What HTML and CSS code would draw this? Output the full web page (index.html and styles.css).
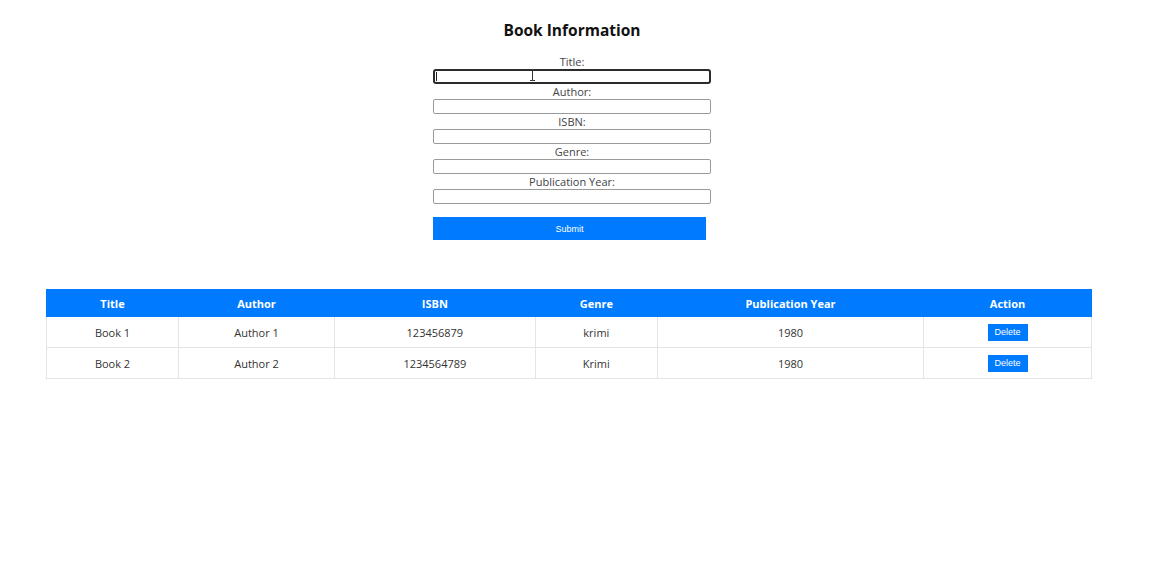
FILE: index.html
```html
<!DOCTYPE html>
<html>
<head>
<meta charset="utf-8">
<title>Book Information</title>
<link rel="stylesheet" href="styles.css">
</head>
<body>
<div class="page">
  <h1 class="title">Book Information</h1>
  <form class="book-form">
    <label class="field-label">Title:</label>
    <div class="input-wrap">
      <input class="field-input focused" type="text">
      <span class="caret"></span>
      <svg class="ibeam" width="7" height="12" viewBox="0 0 7 12"><path d="M1 0.5h2.5v11H1M6 0.5H3.5M6 11.5H3.5" fill="none" stroke="#333" stroke-width="1"/></svg>
    </div>
    <label class="field-label">Author:</label>
    <input class="field-input" type="text">
    <label class="field-label">ISBN:</label>
    <input class="field-input" type="text">
    <label class="field-label">Genre:</label>
    <input class="field-input" type="text">
    <label class="field-label">Publication Year:</label>
    <input class="field-input" type="text">
    <button class="submit-btn" type="button">Submit</button>
  </form>
  <table class="book-table">
    <thead>
      <tr>
        <th class="c1">Title</th>
        <th class="c2">Author</th>
        <th class="c3">ISBN</th>
        <th class="c4">Genre</th>
        <th class="c5">Publication Year</th>
        <th class="c6">Action</th>
      </tr>
    </thead>
    <tbody>
      <tr>
        <td>Book 1</td>
        <td>Author 1</td>
        <td>123456879</td>
        <td>krimi</td>
        <td>1980</td>
        <td><button class="delete-btn" type="button">Delete</button></td>
      </tr>
      <tr>
        <td>Book 2</td>
        <td>Author 2</td>
        <td>1234564789</td>
        <td>Krimi</td>
        <td>1980</td>
        <td><button class="delete-btn" type="button">Delete</button></td>
      </tr>
    </tbody>
  </table>
</div>
</body>
</html>
```
FILE: styles.css
```css
html, body {
  margin: 0;
  padding: 0;
  background: #ffffff;
}

body {
  font-family: "Open Sans", "Noto Sans", sans-serif;
  font-size: 11px;
  color: #333333;
}

.page {
  width: 1144px;
  padding-top: 20px;
}

.title {
  margin: 0;
  font-size: 15.5px;
  line-height: 20px;
  font-weight: 700;
  text-align: center;
  color: #111111;
}

.book-form {
  width: 278px;
  margin: 14px auto 0;
  display: flex;
  flex-direction: column;
}

.field-label {
  display: block;
  text-align: center;
  line-height: 15px;
  height: 15px;
  color: #444444;
}

.field-input {
  display: block;
  box-sizing: border-box;
  width: 278px;
  height: 15px;
  margin: 0;
  padding: 0 2px;
  border: 1px solid #9a9a9a;
  border-radius: 2px;
  background: #ffffff;
  font-size: 10px;
}

.input-wrap {
  position: relative;
  height: 15px;
}

.field-input.focused {
  border: 2px solid #2b2b2b;
  border-radius: 3px;
  outline: none;
}

.caret {
  position: absolute;
  left: 3px;
  top: 3px;
  width: 1px;
  height: 9px;
  background: #222222;
}

.ibeam {
  position: absolute;
  left: 96px;
  top: 0;
}

.submit-btn {
  width: 273px;
  height: 23px;
  margin-top: 13px;
  padding: 0;
  border: none;
  background: #007bff;
  color: #ffffff;
  font-family: "Liberation Sans", Arial, sans-serif;
  font-size: 9px;
}

.book-table {
  margin: 49px 0 0 46px;
  width: 1046px;
  border-collapse: collapse;
  border: 1px solid #e4e4e4;
}

.book-table th {
  background: #007bff;
  color: #ffffff;
  font-weight: 700;
  height: 26px;
  padding: 0;
  text-align: center;
  border: 1px solid #007bff;
}

.book-table td {
  height: 30px;
  padding: 0;
  text-align: center;
  border: 1px solid #e4e4e4;
  color: #333333;
}

.c1 { width: 132px; }
.c2 { width: 156px; }
.c3 { width: 201px; }
.c4 { width: 122px; }
.c5 { width: 267px; }
.c6 { width: 168px; }

.delete-btn {
  width: 40px;
  height: 17px;
  padding: 0;
  border: none;
  background: #007bff;
  color: #ffffff;
  font-family: "Liberation Sans", Arial, sans-serif;
  font-size: 9px;
  vertical-align: middle;
}
```
